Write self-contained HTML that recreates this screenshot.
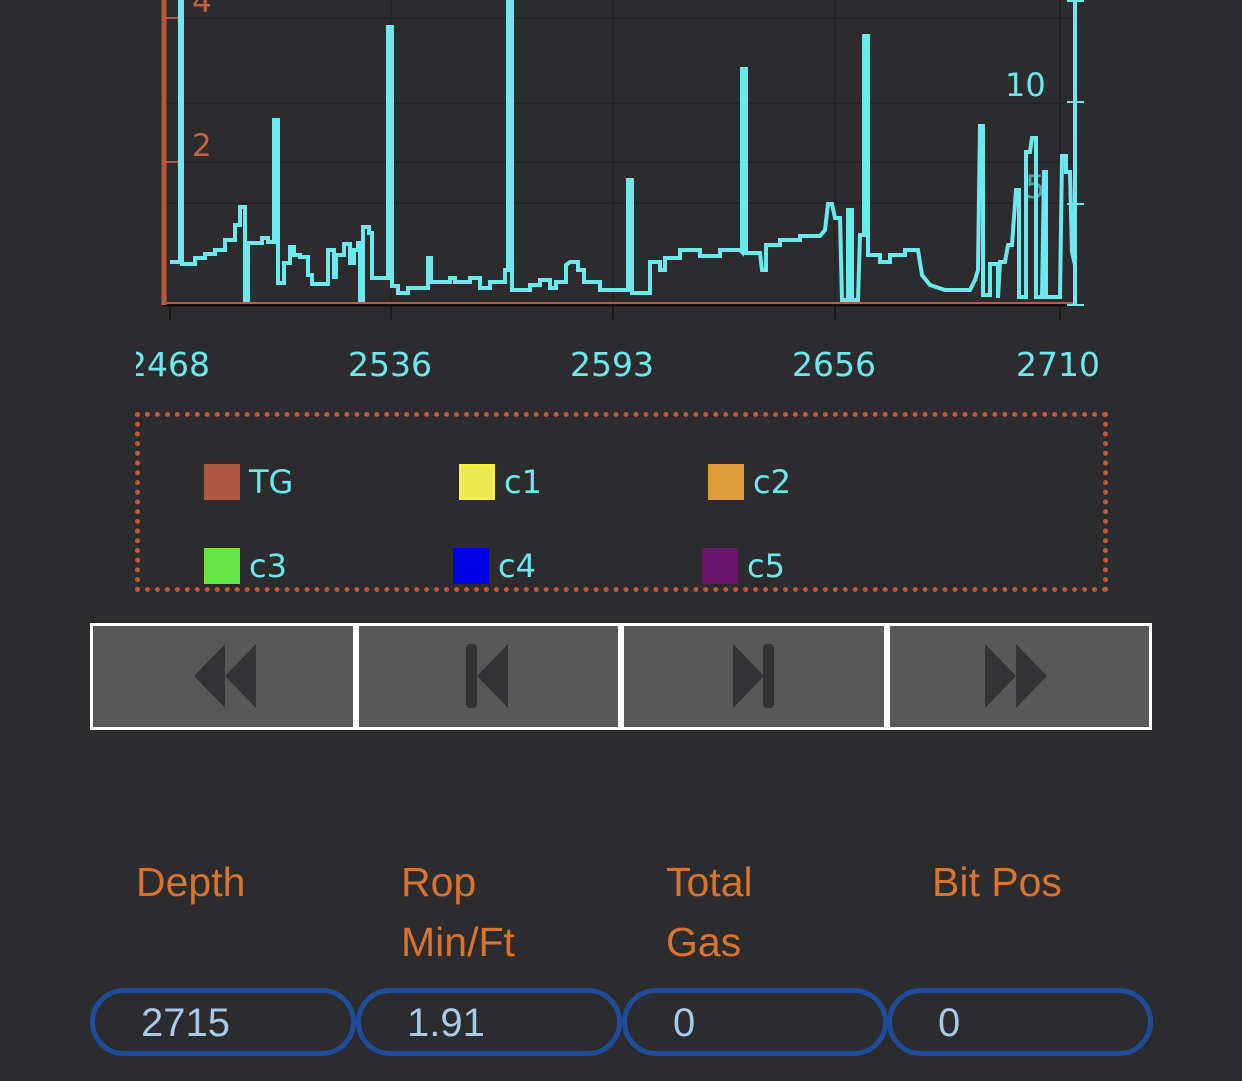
<!DOCTYPE html>
<html><head><meta charset="utf-8"><style>
html,body{margin:0;padding:0;background:#2c2c2e;width:1242px;height:1081px;overflow:hidden;position:relative;font-family:"Liberation Sans",sans-serif}
.a{position:absolute}
.leg{position:absolute;font-family:"DejaVu Sans",sans-serif;font-size:32px;color:#6de8ec;line-height:36px}
.sw{position:absolute;width:36px;height:36px;box-sizing:border-box}
.btn{position:absolute;top:626px;height:101px;background:#585858}
.lab{position:absolute;color:#d9732e;font-size:41px;line-height:60px}
.pill{position:absolute;top:988px;height:68px;border:5px solid #1f4d9a;border-radius:34px;box-sizing:border-box;color:#a9c9e9;font-size:40px;line-height:60px;padding-left:46px}
</style></head><body>
<svg class="a" style="left:0;top:0" width="1242" height="400">
<g stroke="#232325" stroke-width="2">
<line x1="164" y1="18" x2="1075" y2="18"/><line x1="164" y1="103" x2="1075" y2="103"/>
<line x1="164" y1="162" x2="1075" y2="162"/><line x1="164" y1="203" x2="1075" y2="203"/>
<line x1="391" y1="0" x2="391" y2="303"/><line x1="613" y1="0" x2="613" y2="303"/><line x1="835" y1="0" x2="835" y2="303"/><line x1="1060" y1="0" x2="1060" y2="303"/>
</g>
<line x1="164" y1="305" x2="1075" y2="305" stroke="#111" stroke-width="3"/>
<line x1="164" y1="303" x2="1075" y2="303" stroke="#c0583a" stroke-width="2"/>
<g stroke="#1a1a1a" stroke-width="2"><line x1="170" y1="306" x2="170" y2="320"/><line x1="391" y1="306" x2="391" y2="320"/><line x1="613" y1="306" x2="613" y2="320"/><line x1="835" y1="306" x2="835" y2="320"/><line x1="1060" y1="306" x2="1060" y2="320"/></g>
<line x1="164" y1="0" x2="164" y2="305" stroke="#b85838" stroke-width="5"/>
<g stroke="#b85838" stroke-width="2"><line x1="164" y1="18" x2="183" y2="18"/><line x1="164" y1="162" x2="183" y2="162"/></g>
<text x="192" y="12" fill="#c8603c" font-family="DejaVu Sans" font-size="31">4</text>
<text x="192" y="156" fill="#c8603c" font-family="DejaVu Sans" font-size="31">2</text>
<polyline fill="none" stroke="#6de8ec" stroke-width="4" points="170,262 180,262 180,0 182,0 182,264 195,264 195,258 205,258 205,254 215,254 215,250 225,250 225,240 235,240 235,225 240,225 240,207 245,207 245,300 248,300 248,243 262,243 262,238 268,238 268,242 274,242 274,120 278,120 278,283 284,283 284,263 290,263 290,247 294,247 294,255 300,255 300,257 308,257 308,275 312,275 312,284 328,284 328,250 334,250 334,277 336,277 336,255 344,255 344,244 350,244 350,263 354,263 354,250 358,250 358,243 360,243 360,300 363,300 363,227 369,227 369,233 372,233 372,278 388,278 388,27 392,27 392,286 398,286 398,293 408,293 408,288 428,288 428,258 431,258 431,282 450,282 450,278 455,278 455,282 470,282 470,278 480,278 480,288 490,288 490,282 505,282 505,270 508,270 508,0 512,0 512,290 530,290 530,285 540,285 540,280 550,280 550,288 556,288 556,282 566,282 566,265 570,262 578,262 578,270 584,270 584,282 600,282 600,290 628,290 628,180 632,180 632,293 650,293 650,262 660,262 660,270 665,270 665,258 680,258 680,250 700,250 700,256 720,256 720,250 740,250 742,252 742,69 746,69 746,253 760,253 762,270 766,270 766,245 780,245 780,240 800,240 800,236 820,236 825,230 828,204 832,204 835,218 840,218 842,300 848,300 848,210 852,210 852,300 858,300 860,235 864,235 864,36 868,36 868,255 880,255 880,262 890,262 890,255 905,255 905,250 918,250 922,275 930,285 945,290 970,290 975,280 978,270 980,126 983,126 983,295 990,295 990,264 998,264 998,298 1000,262 1005,262 1008,245 1012,245 1016,190 1019,190 1019,297 1026,297 1026,152 1030,152 1032,138 1036,138 1036,297 1042,297 1044,172 1046,172 1046,297 1060,297 1062,156 1066,156 1066,172 1070,172 1072,252 1075,265"/>
<line x1="1075" y1="0" x2="1075" y2="305" stroke="#6de8ec" stroke-width="4"/>
<g stroke="#6de8ec" stroke-width="2"><line x1="1067" y1="102" x2="1084" y2="102"/><line x1="1067" y1="204" x2="1084" y2="204"/><line x1="1067" y1="305" x2="1084" y2="305"/><line x1="1067" y1="1" x2="1084" y2="1"/></g>
<text x="1005" y="96" fill="#6de8ec" font-family="DejaVu Sans" font-size="32">10</text>
<text x="1025" y="198" fill="#6de8ec" fill-opacity="0.6" font-family="DejaVu Sans" font-size="32">5</text>
<g fill="#6de8ec" font-family="DejaVu Sans" font-size="33" text-anchor="middle">
<text x="168" y="376">2468</text><text x="390" y="376">2536</text><text x="612" y="376">2593</text><text x="834" y="376">2656</text><text x="1058" y="376">2710</text></g>
<rect x="0" y="340" width="136" height="50" fill="#2c2c2e"/>
</svg>
<div class="a" style="left:135px;top:412px;width:973px;height:180px;box-sizing:border-box;border:5px dotted #c0583a"></div>
<div class="sw" style="left:204px;top:464px;background:#b05a43"></div><div class="leg" style="left:249px;top:464px">TG</div>
<div class="sw" style="left:459px;top:464px;background:#ebe94f;border:3px solid #f5f33a"></div><div class="leg" style="left:504px;top:464px">c1</div>
<div class="sw" style="left:708px;top:464px;background:#df9a39"></div><div class="leg" style="left:753px;top:464px">c2</div>
<div class="sw" style="left:204px;top:548px;background:#66e545"></div><div class="leg" style="left:249px;top:548px">c3</div>
<div class="sw" style="left:453px;top:548px;background:#0000e6"></div><div class="leg" style="left:498px;top:548px">c4</div>
<div class="sw" style="left:702px;top:548px;background:#6b166e"></div><div class="leg" style="left:747px;top:548px">c5</div>
<div class="a" style="left:90px;top:623px;width:1062px;height:107px;background:#fff"></div>
<div class="btn" style="left:93px;width:260px"></div>
<div class="btn" style="left:359px;width:259px"></div>
<div class="btn" style="left:624px;width:260px"></div>
<div class="btn" style="left:890px;width:259px"></div>
<svg class="a" style="left:0;top:623px" width="1242" height="107">
<g fill="#333335">
<polygon points="194,53 225,21 225,85"/><polygon points="225,53 256,21 256,85"/>
<rect x="466" y="21" width="11" height="64" rx="4"/><polygon points="477,53 508,21 508,85"/>
<polygon points="733,21 764,53 733,85"/><rect x="763" y="21" width="11" height="64" rx="4"/>
<polygon points="985,21 1016,53 985,85"/><polygon points="1016,21 1047,53 1016,85"/>
</g></svg>
<div class="lab" style="left:136px;top:852px">Depth</div>
<div class="lab" style="left:401px;top:852px">Rop<br>Min/Ft</div>
<div class="lab" style="left:666px;top:852px">Total<br>Gas</div>
<div class="lab" style="left:932px;top:852px">Bit Pos</div>
<div class="pill" style="left:90px;width:266px">2715</div>
<div class="pill" style="left:356px;width:266px">1.91</div>
<div class="pill" style="left:622px;width:266px">0</div>
<div class="pill" style="left:887px;width:266px">0</div>
</body></html>
